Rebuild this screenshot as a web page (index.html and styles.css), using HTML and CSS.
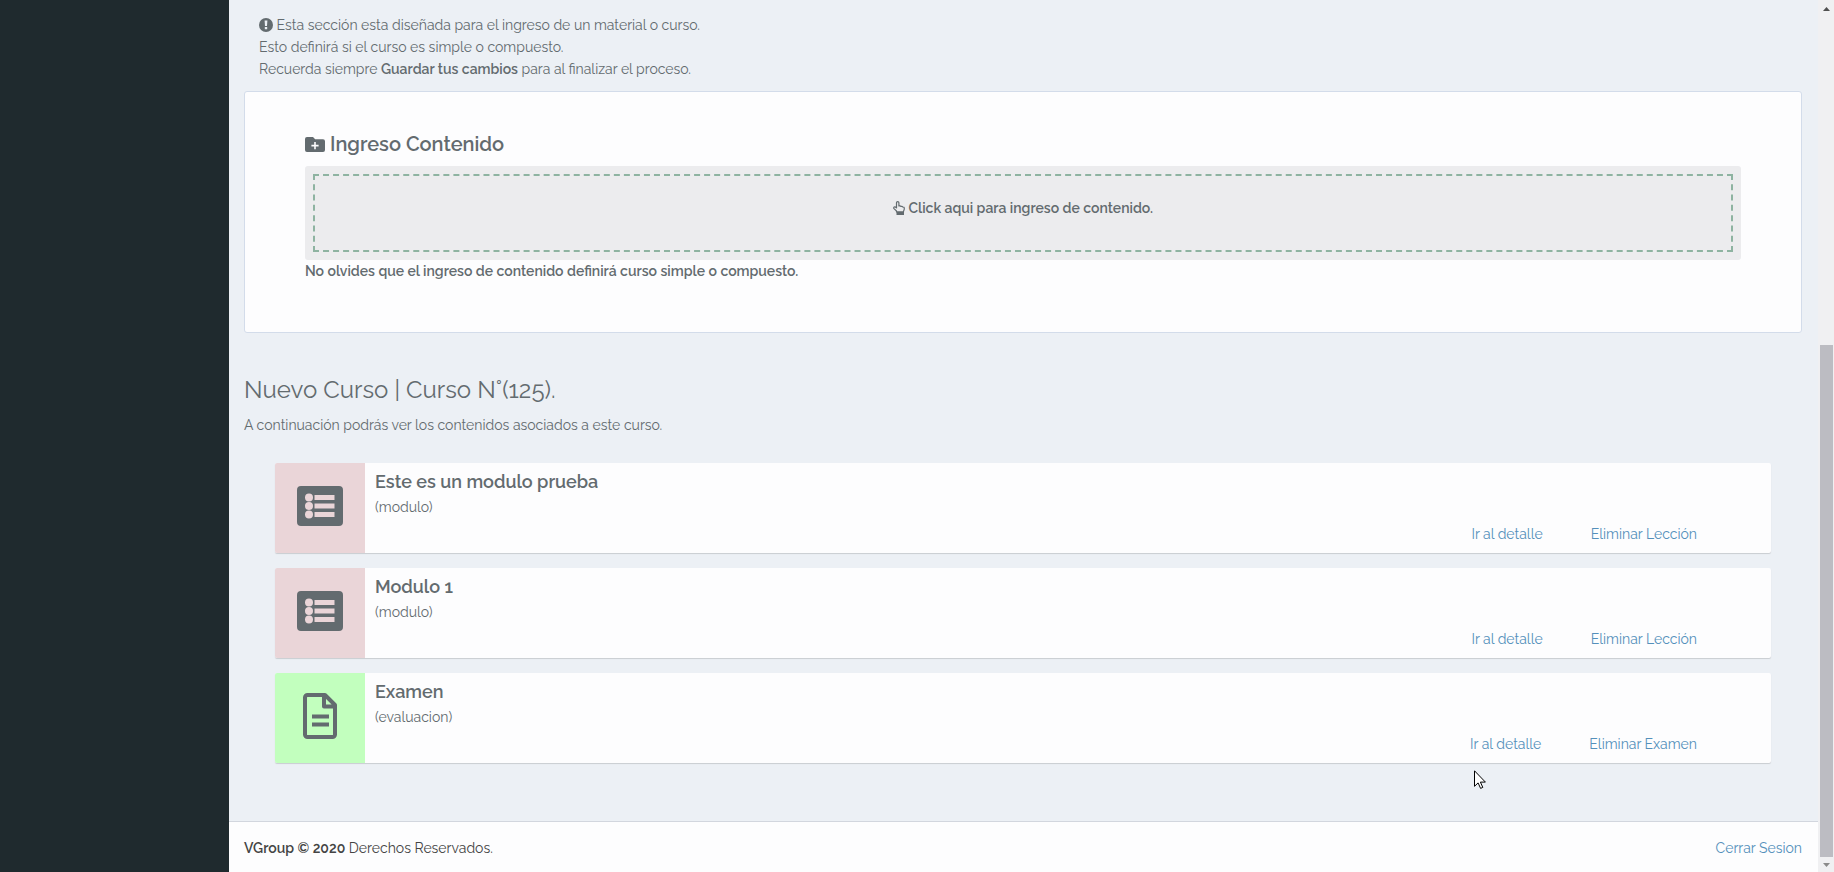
FILE: index.html
```html
<!DOCTYPE html>
<html lang="es">
<head>
<meta charset="utf-8">
<title>Nuevo Curso</title>
<link rel="stylesheet" href="styles.css">
</head>
<body>
<svg class="sprite" aria-hidden="true">
  <symbol id="list" viewBox="0 0 46 40">
    <path fill="currentColor" fill-rule="evenodd" d="M4 0h38a4 4 0 0 1 4 4v32a4 4 0 0 1-4 4H4a4 4 0 0 1-4-4V4a4 4 0 0 1 4-4zM12 7.500a4 4 0 1 0 0 8a4 4 0 1 0 0-8zM12 16a4 4 0 1 0 0 8a4 4 0 1 0 0-8zM12 24.500a4 4 0 1 0 0 8a4 4 0 1 0 0-8zM17.500 9h20v5h-20zM17.500 17.500h20v5h-20zM17.500 26h20v5h-20z"/>
  </symbol>
  <symbol id="file" viewBox="0 0 34 46">
    <path fill="none" stroke="currentColor" stroke-width="4" stroke-linejoin="round" d="M4.500 2H22l10 10v29.500a2.500 2.500 0 0 1-2.500 2.500h-25A2.500 2.500 0 0 1 2 41.500v-37A2.500 2.500 0 0 1 4.500 2zM21 2v11.500h11"/>
    <path fill="currentColor" d="M9 21.500h17v4H9zM9 29.500h17v4H9z"/>
  </symbol>
</svg>
<div class="app">
  <aside class="sidebar"></aside>
  <div class="page">
    <main class="content">
      <p class="intro">
        <svg class="icon-info" viewBox="0 0 14 14" aria-hidden="true"><circle cx="7" cy="7" r="7" fill="currentColor"/><path fill="#ecf0f5" d="M5.600 2.500h2.800l-.4 5.500H6zM5.800 9h2.400v2.300H5.800z"/></svg>
        Esta sección esta diseñada para el ingreso de un material o curso.<br>
        Esto definirá si el curso es simple o compuesto.<br>
        Recuerda siempre <b>Guardar tus cambios</b> para al finalizar el proceso.
      </p>
      <section class="panel">
        <h2 class="panel-title">
          <svg class="icon-folder" viewBox="0 0 20 15" aria-hidden="true"><path fill="currentColor" fill-rule="evenodd" d="M2 0h6l2.200 2.200H18a2 2 0 0 1 2 2V13a2 2 0 0 1-2 2H2a2 2 0 0 1-2-2V2a2 2 0 0 1 2-2zM9.200 5v2.800H6.400v1.600h2.800v2.800h1.600V9.400h2.800V7.800h-2.800V5z"/></svg>
          Ingreso Contenido
        </h2>
        <div class="drop">
          <button class="drop-button" type="button">
            <svg class="icon-hand" viewBox="0 0 12 14" aria-hidden="true"><path fill="none" stroke="currentColor" stroke-width="1.200" stroke-linejoin="round" d="M3.500 10L1 7.600Q.3 6.600 1.200 6t2.300.9V1.800a1.200 1.200 0 0 1 2.400 0V5q1.500-.6 2 .4 1.400-.4 1.800.6 1.600-.2 1.600 1.500 0 1.300-.8 2.800v.7h-7z"/><path fill="currentColor" d="M3.500 10.500h7.500V14H3.500z"/></svg>
            Click aqui para ingreso de contenido.
          </button>
        </div>
        <p class="note">No olvides que el ingreso de contenido definirá curso simple o compuesto.</p>
      </section>
      <h1 class="course-title">Nuevo Curso | Curso N°(125).</h1>
      <p class="course-text">A continuación podrás ver los contenidos asociados a este curso.</p>
      <div class="list">
        <article class="card">
          <div class="tile tile-module"><svg class="icon-list" aria-hidden="true"><use href="#list"/></svg></div>
          <div class="card-body">
            <h3 class="card-title">Este es un modulo prueba</h3>
            <p class="card-type">(modulo)</p>
            <div class="links"><a href="#">Ir al detalle</a><a href="#">Eliminar Lección</a></div>
          </div>
        </article>
        <article class="card">
          <div class="tile tile-module"><svg class="icon-list" aria-hidden="true"><use href="#list"/></svg></div>
          <div class="card-body">
            <h3 class="card-title">Modulo 1</h3>
            <p class="card-type">(modulo)</p>
            <div class="links"><a href="#">Ir al detalle</a><a href="#">Eliminar Lección</a></div>
          </div>
        </article>
        <article class="card">
          <div class="tile tile-exam"><svg class="icon-file" aria-hidden="true"><use href="#file"/></svg></div>
          <div class="card-body">
            <h3 class="card-title">Examen</h3>
            <p class="card-type">(evaluacion)</p>
            <div class="links"><a href="#">Ir al detalle</a><a href="#">Eliminar Examen</a></div>
          </div>
        </article>
      </div>
    </main>
    <footer class="footer">
      <span><b>VGroup © 2020</b> Derechos Reservados.</span>
      <a href="#">Cerrar Sesion</a>
    </footer>
  </div>
  <div class="scrollbar" aria-hidden="true">
    <svg class="arrow arrow-up" viewBox="0 0 7 4"><path fill="currentColor" d="M0 4l3.500-4L7 4z"/></svg>
    <div class="track"><div class="thumb"></div></div>
    <svg class="arrow arrow-down" viewBox="0 0 7 4"><path fill="currentColor" d="M0 0h7L3.500 4z"/></svg>
  </div>
</div>
<svg class="cursor" viewBox="0 0 12 19" aria-hidden="true"><path fill="#fff" stroke="#000" d="M.5.800v15.500l3.600-3.400 2.500 5.500 2.200-1-2.400-5.300h5z"/></svg>
</body>
</html>
```
FILE: styles.css
```css
* { box-sizing: border-box; }
body {
  margin: 0;
  font-family: Raleway, Lato, "Open Sans", sans-serif;
  font-size: 14px;
  font-weight: 400;
  line-height: 22px;
  color: #636b6f;
  background: #ecf0f5;
}
h1, h2, h3, p { margin: 0; }
b { font-weight: 600; }
a { color: #5490bb; text-decoration: none; }
.sprite { position: absolute; width: 0; height: 0; }
.app { display: flex; min-height: 100vh; }
.sidebar { flex: 0 0 229px; background: #1f2a2e; }
.page { flex: 1; display: flex; flex-direction: column; min-width: 0; }
.content { flex: 1; padding: 14px 16px 0 15px; }
.intro { padding: 0 15px 11px; }
.icon-info { width: 14px; height: 14px; vertical-align: -2px; }
.panel {
  padding: 38px 60px 50px;
  background: #fdfdfe;
  border: 1px solid #d3dcea;
  border-radius: 3px;
}
.panel-title { font-size: 20px; line-height: 28px; font-weight: 600; padding-bottom: 8px; }
.icon-folder { width: 20px; height: 15px; vertical-align: -1px; }
.drop { padding: 8px; background: #ececee; border-radius: 3px; }
.drop-button {
  display: block;
  width: 100%;
  height: 78px;
  padding: 0 0 10px;
  border: 2px dashed #8eb3a1;
  background: none;
  color: inherit;
  font: inherit;
  font-weight: 600;
}
.icon-hand { width: 12px; height: 14px; vertical-align: -2px; }
.note { font-weight: 600; }
.course-title { padding-top: 40px; font-size: 24px; line-height: 34px; font-weight: 400; }
.course-text { padding-top: 7px; }
.list { display: flex; flex-direction: column; gap: 15px; padding: 27px 31px 20px; }
.card {
  display: flex;
  min-height: 90px;
  background: #fdfdfe;
  border-radius: 2px;
  box-shadow: 0 1px 1px rgba(0, 0, 0, .15);
}
.tile { flex: 0 0 90px; display: flex; align-items: center; justify-content: center; padding-bottom: 4px; border-radius: 2px 0 0 2px; }
.tile-module { background: #ead5d8; }
.tile-exam { background: #c2ffbe; }
.icon-list { width: 46px; height: 40px; }
.icon-file { width: 34px; height: 46px; }
.card-body { flex: 1; padding: 5px 74px 5px 10px; }
.card-title { font-size: 18px; line-height: 28px; font-weight: 600; }
.card-type { line-height: 22px; }
.links { display: flex; justify-content: flex-end; gap: 48px; padding-top: 5px; }
.footer {
  display: flex;
  justify-content: space-between;
  padding: 15px 16px 13px 15px;
  background: #fdfdfe;
  border-top: 1px solid #d2d6de;
  color: #444;
}
.scrollbar {
  flex: 0 0 16px;
  display: flex;
  flex-direction: column;
  align-items: center;
  padding: 7px 0 5px;
  background: #f0f0f2;
  color: #505050;
}
.arrow { width: 7px; height: 4px; }
.arrow-down { color: #8a8a8a; }
.track { flex: 1; width: 13px; display: flex; align-items: flex-end; padding: 6px 0; }
.thumb { width: 100%; height: 61%; background: #bcbcc2; }
.cursor { position: absolute; left: 1474px; top: 770px; width: 12px; height: 19px; }
```
